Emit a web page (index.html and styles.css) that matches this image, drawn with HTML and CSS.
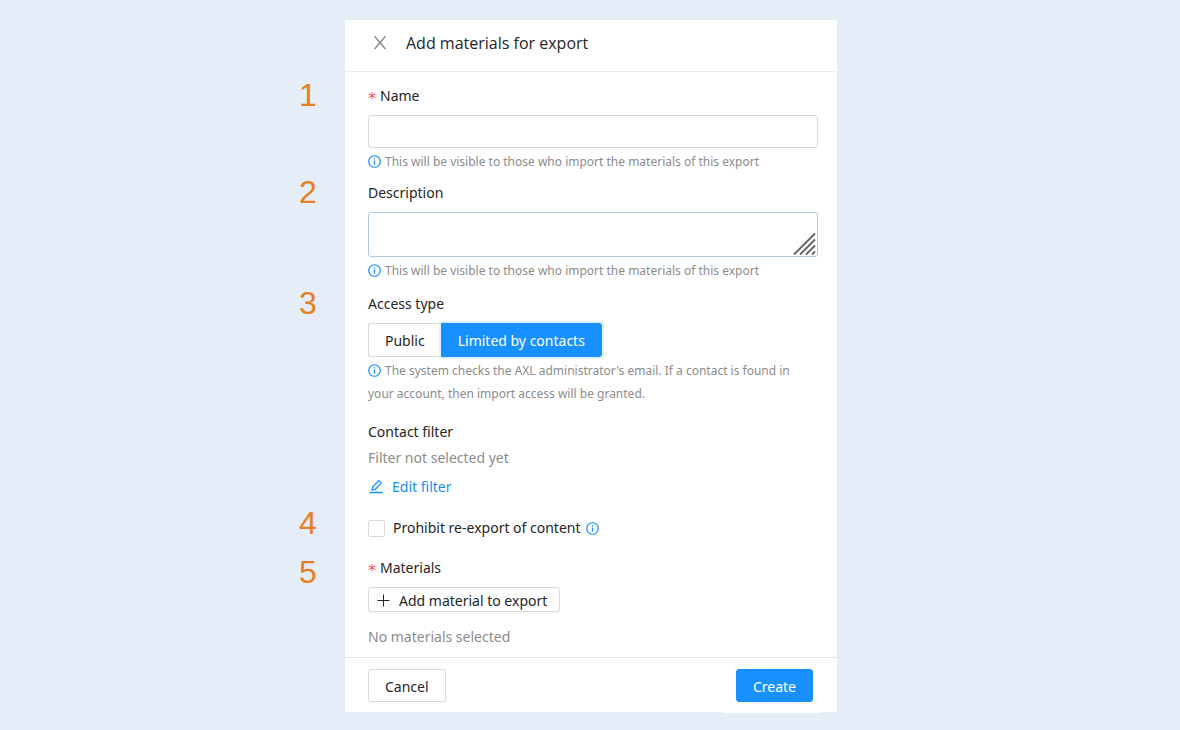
FILE: index.html
```html
<!DOCTYPE html>
<html lang="en">
<head>
  <meta charset="UTF-8">
  <meta name="viewport" content="width=device-width, initial-scale=1.0">
  <title>Add materials for export</title>
  <link rel="stylesheet" href="styles.css">
</head>
<body>
  <!-- Shared icon -->
  <svg class="sprite" aria-hidden="true">
    <symbol id="info" viewBox="0 0 14 14">
      <circle cx="7" cy="7" r="6.2" fill="none" stroke="currentColor" stroke-width="1.3"/>
      <path d="M7 6v4.4M7 3.6v1.3" fill="none" stroke="currentColor" stroke-width="1.3"/>
    </symbol>
  </svg>

  <form class="drawer" onsubmit="return false">
    <header class="drawer-header">
      <button type="button" class="close" aria-label="Close">
        <svg width="14" height="14" viewBox="0 0 14 14"><path d="M1.5 .3l11 12.6M12.5 .3l-11 12.6" fill="none" stroke="currentColor" stroke-width="1.5"/></svg>
      </button>
      <h1>Add materials for export</h1>
    </header>

    <main class="drawer-body">
      <div class="field">
        <span class="step">1</span>
        <label class="label required" for="name">Name</label>
        <input class="control" type="text" id="name">
        <p class="hint"><svg class="info"><use href="#info"/></svg>This will be visible to those who import the materials of this export</p>
      </div>

      <div class="field">
        <span class="step">2</span>
        <label class="label" for="description">Description</label>
        <div class="textarea-wrap">
          <textarea class="control active" id="description"></textarea>
          <svg class="resizer" width="24" height="24" viewBox="0 0 24 24"><path d="M1 22.500L22 1.500M7 22.500L22 7.500M13 22.500l9-9M19 22.500l3-3" fill="none" stroke="#666" stroke-width="1.8"/></svg>
        </div>
        <p class="hint"><svg class="info"><use href="#info"/></svg>This will be visible to those who import the materials of this export</p>
      </div>

      <div class="field access">
        <span class="step">3</span>
        <span class="label" id="access-label">Access type</span>
        <div class="segments" role="group" aria-labelledby="access-label">
          <button type="button" class="segment">Public</button>
          <button type="button" class="segment selected">Limited by contacts</button>
        </div>
        <p class="hint"><svg class="info"><use href="#info"/></svg>The system checks the AXL administrator's email. If a contact is found in your account, then import access will be granted.</p>
      </div>

      <div class="field filter">
        <h2 class="label">Contact filter</h2>
        <p class="empty">Filter not selected yet</p>
        <a class="edit" href="#">
          <svg width="16" height="16" viewBox="0 0 16 16" fill="none" stroke="currentColor" stroke-width="1.3"><path d="M1.500 13.500h13M4 11l.7-3.200 6.200-6.200 2.500 2.500-6.200 6.200z"/></svg>
          Edit filter
        </a>
      </div>

      <div class="field prohibit">
        <span class="step">4</span>
        <input type="checkbox" id="prohibit">
        <label for="prohibit">Prohibit re-export of content</label>
        <svg class="info"><use href="#info"/></svg>
      </div>

      <div class="field materials">
        <span class="step">5</span>
        <span class="label required">Materials</span>
        <button type="button" class="button small">
          <svg width="13" height="13" viewBox="0 0 13 13"><path d="M6.500 .5v12M.5 6.500h12" fill="none" stroke="currentColor" stroke-width="1"/></svg>
          Add material to export
        </button>
        <p class="empty">No materials selected</p>
      </div>
    </main>

    <footer class="drawer-footer">
      <button type="button" class="button">Cancel</button>
      <button type="submit" class="button primary">Create</button>
    </footer>
  </form>
</body>
</html>
```
FILE: styles.css
```css
* {
  box-sizing: border-box;
}

body {
  margin: 0;
  padding: 20px;
  background-color: #e5edf7;
  color: #262626;
  font-family: "Noto Sans", "Open Sans", sans-serif;
  font-size: 14px;
  line-height: 22px;
}

h1, h2, p {
  margin: 0;
  font-size: 14px;
  font-weight: normal;
}

button, input, textarea {
  font: inherit;
  color: inherit;
}

button {
  cursor: pointer;
}

.sprite {
  display: none;
}

/* Drawer */
.drawer {
  max-width: 492px;
  margin: 0 auto;
  background-color: #fff;
  position: relative;
  left: 1px;
}

.drawer-header {
  display: flex;
  align-items: center;
  gap: 19px;
  padding: 12px 28px 17px;
  border-bottom: 1px solid #ececec;
}

.drawer-header h1 {
  font-family: "Open Sans", sans-serif;
  font-size: 16px;
}

.close {
  display: flex;
  padding: 0;
  border: none;
  background: none;
  color: #8c8c8c;
}

.drawer-body {
  padding: 13px 19px 9px 23px;
}

/* Fields */
.field {
  position: relative;
  margin-bottom: 9px;
}

.step {
  position: absolute;
  left: -69px;
  top: -1px;
  color: #e67e22;
  font: 32px/22px "Liberation Sans", Arial, sans-serif;
}

.label {
  display: block;
  margin-bottom: 8px;
}

.required::before {
  content: "*";
  margin-right: 4px;
  color: #ff4d4f;
  font-family: "DejaVu Sans", sans-serif;
  font-size: 16px;
  line-height: 14px;
  vertical-align: -3px;
}

.control {
  display: block;
  width: 100%;
  height: 33px;
  padding: 4px 11px;
  border: 1px solid #d9d9d9;
  border-radius: 3px;
  background-color: #fff;
  outline: none;
}

.textarea-wrap {
  position: relative;
}

textarea.control {
  height: 45px;
  resize: none;
}

.control.active {
  border-color: #a9cbe6;
}

.resizer {
  position: absolute;
  right: 1px;
  bottom: 1px;
  pointer-events: none;
}

.hint {
  margin-top: 2px;
  color: #8c8c8c;
  font-size: 12px;
  line-height: 23px;
}

.info {
  width: 13px;
  height: 13px;
  color: #1890ff;
}

.hint .info {
  margin-right: 4px;
  vertical-align: -2px;
}

.empty {
  color: #8c8c8c;
}

/* Access type */
.access {
  margin: 11px 0 16px;
}

.segments {
  display: flex;
}

.segment {
  height: 34px;
  padding: 2px 16px 0;
  border: 1px solid #d9d9d9;
  border-right: none;
  border-radius: 3px 0 0 3px;
  background-color: #fff;
}

.segment.selected {
  border: 1px solid #1890ff;
  border-radius: 0 3px 3px 0;
  background-color: #1890ff;
  color: #fff;
  box-shadow: 0 0 0 2px #e0f0ff;
}

/* Contact filter */
.filter {
  margin-bottom: 15px;
}

.filter .label {
  margin-bottom: 4px;
}

.edit {
  display: flex;
  align-items: center;
  gap: 8px;
  width: fit-content;
  margin-top: 7px;
  color: #1890ff;
  text-decoration: none;
}

/* Re-export */
.prohibit {
  display: flex;
  align-items: center;
  margin-bottom: 15px;
  padding-top: 4px;
}

.prohibit input {
  appearance: none;
  width: 17px;
  height: 17px;
  margin: 0 8px 0 0;
  border: 1px solid #d9d9d9;
  border-radius: 2px;
}

.prohibit input:checked {
  border-color: #1890ff;
  background-color: #1890ff;
}

.prohibit .info {
  margin-left: 5px;
}

/* Materials */
.materials {
  margin-bottom: 0;
}

.materials .step {
  top: 7px;
}

.materials .label {
  padding-top: 3px;
}

.materials .empty {
  margin-top: 14px;
}

/* Buttons */
.button {
  display: flex;
  align-items: center;
  gap: 9px;
  height: 33px;
  padding: 2px 16px 0;
  border: 1px solid #d9d9d9;
  border-radius: 3px;
  background-color: #fff;
  box-shadow: 0 2px 0 rgba(0, 0, 0, 0.02);
}

.button.small {
  height: 25px;
  padding: 2px 12px 0 8px;
}

.button.primary {
  border-color: #1890ff;
  background-color: #1890ff;
  color: #fff;
}

.drawer-footer {
  display: flex;
  justify-content: space-between;
  padding: 11px 24px 10px 23px;
  border-top: 1px solid #e4e4e4;
}

/* Lower edge under the primary button */
.drawer-footer::after {
  content: "";
  position: absolute;
  top: 100%;
  right: 16px;
  width: 99px;
  height: 1px;
  background-color: #fff;
}
```
